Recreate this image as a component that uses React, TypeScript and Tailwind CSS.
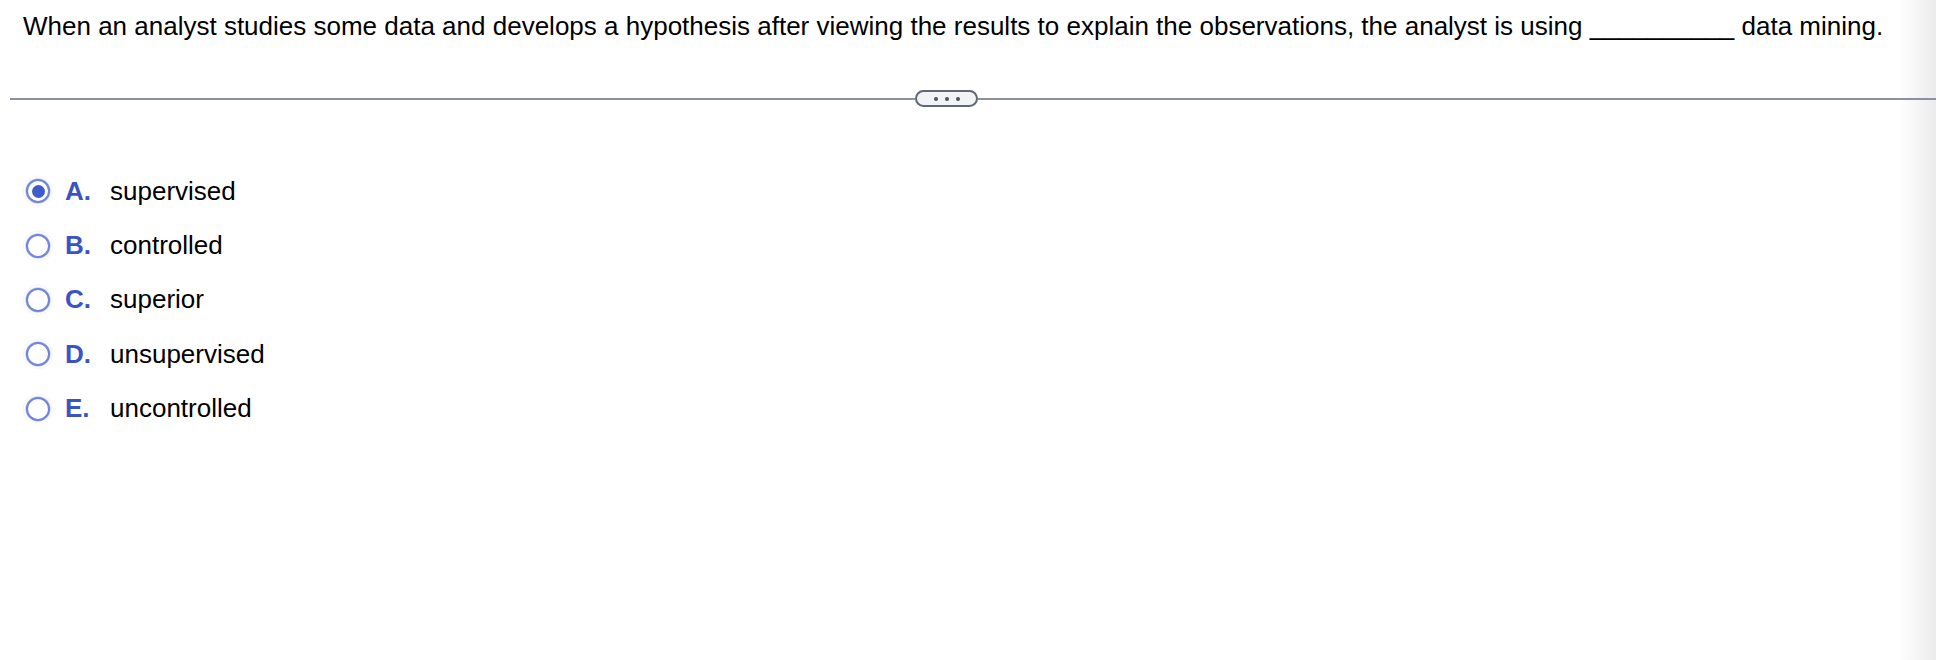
const options = [
  { key: "A", label: "supervised" },
  { key: "B", label: "controlled" },
  { key: "C", label: "superior" },
  { key: "D", label: "unsupervised" },
  { key: "E", label: "uncontrolled" },
];

function Radio({ checked }: { checked: boolean }) {
  return (
    <span className="flex h-[28px] w-[28px] items-center justify-center rounded-full shadow-[0_0_2px_1px_rgba(0,0,0,0.05)]">
      <span className="flex h-[24px] w-[24px] items-center justify-center rounded-full border-[2.5px] border-[#7186d8] bg-white shadow-[0_0_1px_0.5px_rgba(113,134,216,0.6)]">
        {checked ? <span className="h-[13px] w-[13px] rounded-full bg-[#3f5ccd]" /> : null}
      </span>
    </span>
  );
}

export default function App() {
  const selected = "A";

  return (
    <div className="h-[660px] w-full bg-[linear-gradient(90deg,#ffffff_98.1%,#ebebeb_100%)] font-['Liberation_Sans',Arial,sans-serif] text-black">
      <p className="px-[23px] pt-[11px] text-[26px] leading-[30px]">
        When an analyst studies some data and develops a hypothesis after viewing the results to explain the observations, the analyst is using{" "}
        __________ data mining.
      </p>

      <div className="mt-[49px] flex items-center pl-[10px]">
        <div className="h-[2px] w-[905px] bg-[#8a91a0]" />
        <button
          type="button"
          className="flex h-[17px] w-[63px] items-center justify-center gap-[7px] rounded-full border-2 border-[#5f6878] bg-[#f2f3f5]"
        >
          <span className="h-[4px] w-[4px] rounded-full bg-[#4b5260]" />
          <span className="h-[4px] w-[4px] rounded-full bg-[#4b5260]" />
          <span className="h-[4px] w-[4px] rounded-full bg-[#4b5260]" />
        </button>
        <div className="h-[2px] flex-1 bg-[#8a91a0]" />
      </div>

      <ul className="mt-[57px] flex flex-col pl-[24px]">
        {options.map((option) => (
          <li key={option.key} className="flex h-[54.4px] items-center">
            <Radio checked={option.key === selected} />
            <span className="ml-[13px] w-[45px] text-[26px] font-bold text-[#3b54c3]">{option.key}.</span>
            <span className="text-[26px]">{option.label}</span>
          </li>
        ))}
      </ul>
    </div>
  );
}
